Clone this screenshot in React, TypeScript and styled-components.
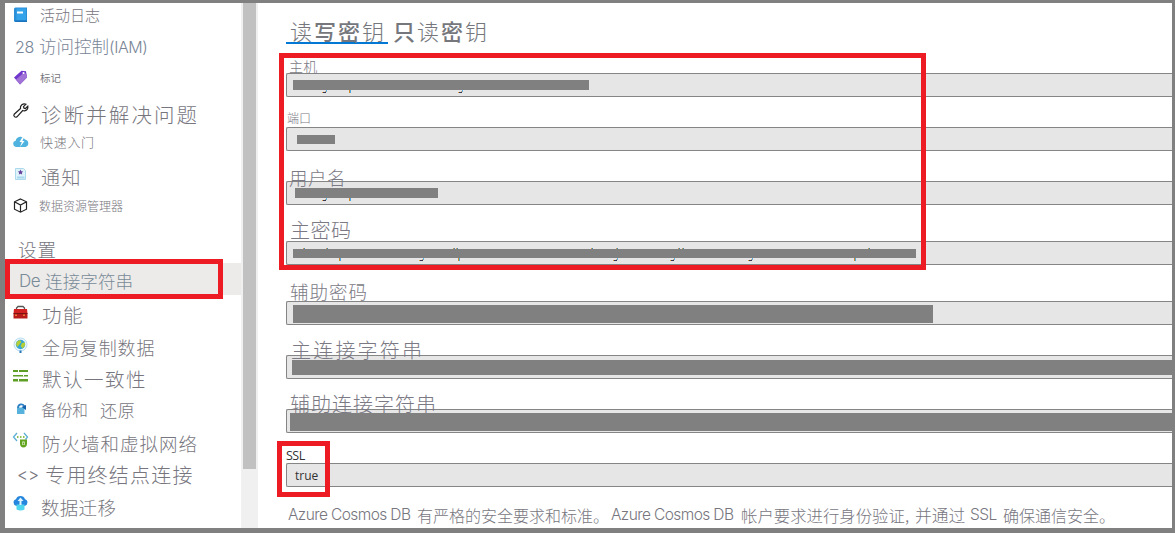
import React from 'react';
import styled, { createGlobalStyle } from 'styled-components';

const Global = createGlobalStyle`
  * { box-sizing: border-box; }
  body { margin: 0; overflow: hidden; font-family: "Noto Sans CJK SC", sans-serif; font-weight: 300; }
`;

const Frame = styled.div`
  position: relative;
  display: flex;
  width: 1175px;
  height: 533px;
  border: solid #808080;
  border-width: 3px 3px 5px 5px;
  background: #fff;
  overflow: hidden;
`;

const Sidebar = styled.nav`
  width: 236px;
  flex: none;
`;

const Item = styled.div<{ $h: number; $active?: boolean }>`
  display: flex;
  align-items: center;
  height: ${(p) => p.$h}px;
  padding-left: 7px;
  background: ${(p) => (p.$active ? '#edebe9' : 'transparent')};
`;

const IconSlot = styled.span<{ $dy?: number }>`
  display: flex;
  flex: none;
  width: 18px;
  height: 18px;
  margin-top: ${(p) => (p.$dy ?? 0) * 2}px;
`;

const Text = styled.span<{ $size: number; $gap?: number; $ml?: number; $dy?: number; $color?: string; $latin?: boolean; $weight?: number }>`
  flex: none;
  font-family: ${(p) => (p.$latin ? 'Inter' : '"Noto Sans CJK SC"')}, sans-serif;
  font-size: ${(p) => p.$size}px;
  font-weight: ${(p) => p.$weight ?? 300};
  line-height: 20px;
  letter-spacing: ${(p) => p.$gap ?? 0}px;
  margin-left: ${(p) => p.$ml ?? 0}px;
  margin-top: ${(p) => (p.$dy ?? 0) * 2}px;
  color: ${(p) => p.$color ?? '#77767e'};
  white-space: pre;
`;

const ScrollTrack = styled.div`
  flex: none;
  width: 17px;
  padding: 0 2px;
  background: #f0f0f0;
`;

const ScrollThumb = styled.div`
  height: 466px;
  background: #c1c1c1;
`;

const Main = styled.main`
  flex: 1;
  min-width: 0;
  padding-left: 28px;
`;

const Tabs = styled.div`
  display: flex;
  height: 41px;
  padding-top: 13px;
`;

const Tab = styled.div<{ $selected?: boolean }>`
  width: 102px;
  height: 28px;
  padding-left: ${(p) => (p.$selected ? 4 : 5)}px;
  border-bottom: 2px solid ${(p) => (p.$selected ? '#0078d4' : 'transparent')};
  font-size: 22px;
  line-height: 28px;
  letter-spacing: 2px;
  color: #75777c;
  white-space: nowrap;
  b { font-weight: 500; }
`;

const Label = styled.div<{ $h: number; $size: number; $gap: number; $ml: number; $up: number; $latin?: boolean }>`
  height: ${(p) => p.$h}px;
  padding-top: ${(p) => p.$up}px;
  padding-left: ${(p) => p.$ml}px;
  font-family: ${(p) => (p.$latin ? '"Open Sans"' : '"Noto Sans CJK SC"')}, sans-serif;
  font-weight: ${(p) => (p.$latin ? 400 : 300)};
  font-size: ${(p) => p.$size}px;
  line-height: 20px;
  letter-spacing: ${(p) => p.$gap}px;
  color: ${(p) => (p.$latin ? '#333' : '#7a7984')};
  white-space: nowrap;
`;

const Input = styled.div<{ $pt?: number; $pl?: number }>`
  height: 24px;
  padding: ${(p) => p.$pt ?? 0}px 0 0 ${(p) => p.$pl ?? 0}px;
  border: 1px solid #858585;
  border-right: 0;
  border-radius: 2px 0 0 2px;
  background: #e6e6e6;
  font-family: "Open Sans", sans-serif;
  font-weight: 400;
  font-size: 12px;
  line-height: 23px;
  color: #333;
`;

const Redaction = styled.div<{ $w?: number; $h: number }>`
  position: relative;
  width: ${(p) => (p.$w ? p.$w + 'px' : '100%')};
  height: ${(p) => p.$h}px;
  background: #808080;
`;

const MarksSvg = styled.svg`
  position: absolute;
  left: 0;
  top: 0;
  overflow: visible;
`;

/* Stroke ends of the covered value that stick out of the redaction bar. */
const Marks = ({ h, hooks = [], stems = [], tops = [] }: { h: number; hooks?: number[]; stems?: number[]; tops?: number[] }) => (
  <MarksSvg width="1" height={h} shapeRendering="crispEdges">
    {hooks.map((x) => (
      <g key={'h' + x}>
        <path d={`M${x} ${h + 2}h1v1h-1z`} fill="#e0a040" />
        <path d={`M${x + 1} ${h + 2}h3v1h-3z`} fill="#3a3550" />
        <path d={`M${x + 4} ${h}h1v2h-1z`} fill="#5ab0e0" />
        <path d={`M${x + 3} ${h + 1}h1v1h-1z`} fill="#c9a070" />
      </g>
    ))}
    {stems.map((x) => (
      <g key={'s' + x}>
        <path d={`M${x} ${h}h1v3h-1z`} fill="#d08a28" />
        <path d={`M${x + 1} ${h}h1v3h-1z`} fill="#4aa8e4" />
      </g>
    ))}
    {tops.map((x) => (
      <g key={'t' + x}>
        <path d={`M${x} -1h1v1h-1z`} fill="#d0a050" />
        <path d={`M${x + 1} -1h1v1h-1z`} fill="#3f88b8" />
      </g>
    ))}
  </MarksSvg>
);

const Highlight = styled.div<{ $x: number; $y: number; $w: number; $h: number }>`
  position: absolute;
  left: ${(p) => p.$x - 5}px;
  top: ${(p) => p.$y - 3}px;
  width: ${(p) => p.$w}px;
  height: ${(p) => p.$h}px;
  border: 5px solid #ed1c24;
`;

const Note = styled.p`
  display: flex;
  height: 20px;
  margin: 18px 0 0 2px;
`;

const NotePart = styled(Text)<{ $w: number }>`
  width: ${(p) => p.$w}px;
`;

const BookIcon = () => (
  <svg width="18" height="18" viewBox="0 0 18 18">
    <path d="M3.500 0.500H15v14.500H3.500A1.500 1.500 0 0 1 2 13.500V2A1.500 1.500 0 0 1 3.500.5z" fill="#2b8fd8" />
    <path d="M4.500 1.500H14v11.500H4.500z" fill="#35a3ea" />
    <path d="M2.500 13.500H15V15H3.500z" fill="#1a74bd" />
    <path d="M5 4.500h6v2H5z" fill="#fff" />
  </svg>
);
const TagIcon = () => (
  <svg width="18" height="18" viewBox="0 0 18 18">
    <path d="M2 8.500 9.500 1.800l4.500.4 1 6.300-7 7z" fill="#6f35cc" />
    <path d="m4 10.500 8-7 2.500 1.500.4 3.500L8 15.500z" fill="#a273d6" />
    <circle cx="11.500" cy="4" r="1" fill="#fff" />
  </svg>
);
const WrenchIcon = () => (
  <svg width="18" height="18" viewBox="0 0 18 18" fill="none" stroke="#222" strokeWidth="1.200">
    <path d="M14 2.200 11.500 4.700l.5 1.500 1.500.3 2.300-2.300c.6 2.500-1.100 4.700-3.600 4.600-.6 0-1-.1-1.500-.3L5 14.800c-1.800 1.300-4-.8-2.800-2.600L8.500 6.500C7.700 3.600 11 .8 14 2.200z" />
  </svg>
);
const CloudIcon = () => (
  <svg width="18" height="18" viewBox="0 0 18 18">
    <path d="M4 14a3.200 3.200 0 0 1-.3-6.300A5 5 0 0 1 13 6.500 3.800 3.800 0 0 1 13.200 14z" fill="#50b3df" />
    <path d="m10.500 4-3 5h2.300L8 14l4.500-6h-2.200l2-4z" fill="#fff" />
  </svg>
);
const NoticeIcon = () => (
  <svg width="18" height="18" viewBox="0 0 18 18">
    <path d="M3.500 3.500h8l2 2V14.500h-10z" fill="#dff3fb" stroke="#acd9ec" />
    <path d="M5 11.500h7.500v2H5z" fill="#a8d8ed" />
    <path d="m8.500 4.500.8 1.700 1.900.2-1.400 1.300.4 1.900-1.700-.9-1.700.9.400-1.900-1.400-1.300 1.900-.2z" fill="#65419c" />
  </svg>
);
const CubeIcon = () => (
  <svg width="18" height="18" viewBox="0 0 18 18" fill="none" stroke="#222" strokeWidth="1.200">
    <path d="m8.500 2 6 2.800v7.400l-6 3-6-3V4.800zM2.500 4.800l6 3.200 6-3.200M8.500 8v7.200" />
  </svg>
);
const ToolboxIcon = () => (
  <svg width="18" height="18" viewBox="0 0 18 18">
    <path d="M4.500 5.500V4l1.500-1.500h5L12.500 4v1.500" fill="none" stroke="#555" strokeWidth="1.300" />
    <path d="M2 5h13l.5 4.500h-14z" fill="#d32020" />
    <path d="M1.500 9.500h14v5h-14z" fill="#b81a1a" />
    <path d="M1.500 9h14v1h-14z" fill="#7b1010" />
    <path d="M3 10.500h2v1.500H3zM11 10.500h2v1.500h-2z" fill="#e8783c" />
  </svg>
);
const GlobeIcon = () => (
  <svg width="18" height="18" viewBox="0 0 18 18">
    <circle cx="8.500" cy="7.500" r="6.500" fill="#edf7fc" stroke="#b9def2" />
    <circle cx="8.500" cy="7.500" r="4.700" fill="#32a5d8" />
    <path d="M5 4.500 8 3l1.500 2L7 8 5.500 10 4 7.500zM10 6l3-.5v3l-2.500 3L8.500 9z" fill="#b3cf35" />
    <path d="M7.500 13.500h2v2.500h-2z" fill="#2676b8" />
  </svg>
);
const BarsIcon = () => (
  <svg width="18" height="18" viewBox="0 0 18 18">
    <path d="M1 3h15v2H1zM1 8h15v1.500H1zM1 12h15v2.500H1z" fill="#5f9e24" />
    <path d="M6 3h1v2H6zM11 8h1v1.500h-1zM6 12h1v2.500H6z" fill="#fff" />
  </svg>
);
const BackupIcon = () => (
  <svg width="18" height="18" viewBox="0 0 18 18">
    <path d="M5 7.500h7.500V14H5z" fill="#56b2dd" />
    <path d="M6 8c0-4 5-5 6.500-1.500" fill="none" stroke="#2f80c4" strokeWidth="1.800" />
    <path d="m9.500 7 4.500-2v5z" fill="#1560ab" />
  </svg>
);
const FirewallIcon = () => (
  <svg width="18" height="18" viewBox="0 0 18 18">
    <path d="M5 1 1.500 5 5 9M12 1l3.500 4-2 2.500" fill="none" stroke="#5bb0d4" strokeWidth="1.300" />
    <path d="M5 4.200h1.500v1.500H5zM8 4.200h1.500v1.500H8zM11 4.200h1.500v1.500H11z" fill="#6daf21" />
    <path d="M8 7.500h7v4c0 2.500-1.500 4-3.500 4S8 14 8 11.500z" fill="#62a420" />
    <path d="M10.300 9.500h2.400v3.500h-2.400z" fill="#e8f3d8" />
    <path d="M11 10.500h1v2h-1z" fill="#62a420" />
  </svg>
);
const MigrateIcon = () => (
  <svg width="18" height="18" viewBox="0 0 18 18">
    <path d="M4.500 11a3.500 3.500 0 0 1-.5-6.800 4.800 4.800 0 0 1 9 0A3.500 3.500 0 0 1 12.500 11z" fill="#2685dc" />
    <path d="M4.500 9.500h8V14.500q-4 2-8 0z" fill="#50d5ee" />
    <path d="M8.500 2.500 11.500 6H9.500v4h-2V6h-2z" fill="#dff5ff" />
  </svg>
);

export default function App() {
  return (
    <>
      <Global />
      <Frame>
        <Sidebar>
          <Item $h={25}><IconSlot><BookIcon /></IconSlot><Text $size={15} $ml={10} $dy={-0.5}>活动日志</Text></Item>
          <Item $h={37}><Text $size={16} $gap={-0.3} $ml={3} $color="#788596" $latin>28</Text><Text $size={17.5} $ml={5} $dy={-0.5} $color="#788596">访问控制</Text><Text $size={16} $gap={-0.4} $color="#788596" $latin>(IAM)</Text></Item>
          <Item $h={27}><IconSlot $dy={-0.5}><TagIcon /></IconSlot><Text $size={10.5} $ml={10} $dy={-1} $weight={400}>标记</Text></Item>
          <Item $h={41}><IconSlot $dy={-2}><WrenchIcon /></IconSlot><Text $size={20.5} $gap={2.1} $ml={11} $dy={1}>诊断并解决问题</Text></Item>
          <Item $h={16}><IconSlot $dy={1}><CloudIcon /></IconSlot><Text $size={13} $gap={0.7} $ml={10} $dy={1}>快速入门</Text></Item>
          <Item $h={49}><IconSlot><NoticeIcon /></IconSlot><Text $size={19} $gap={1.5} $ml={11} $dy={3}>通知</Text></Item>
          <Item $h={13}><IconSlot $dy={1}><CubeIcon /></IconSlot><Text $size={12} $ml={9} $dy={1}>数据资源管理器</Text></Item>
          <Item $h={52}><Text $size={18.5} $gap={1} $ml={6} $dy={12}>设置</Text></Item>
          <Item $h={32} $active><Text $size={17} $gap={-0.5} $ml={7} $dy={1.5} $color="#788a98" $latin>De</Text><Text $size={17.6} $ml={5} $dy={1.5} $color="#788a98">连接字符串</Text></Item>
          <Item $h={40}><IconSlot $dy={-2.5}><ToolboxIcon /></IconSlot><Text $size={19.5} $gap={1.5} $ml={12}>功能</Text></Item>
          <Item $h={25}><IconSlot $dy={-2}><GlobeIcon /></IconSlot><Text $size={18} $gap={0.9} $ml={12} $dy={-1}>全局复制数据</Text></Item>
          <Item $h={38}><IconSlot $dy={-3}><BarsIcon /></IconSlot><Text $size={19.5} $gap={1.5} $ml={12}>默认一致性</Text></Item>
          <Item $h={25}><IconSlot $dy={-2}><BackupIcon /></IconSlot><Text $size={15.7} $ml={11} $dy={-1}>备份和</Text><Text $size={17} $gap={0.7} $ml={12} $dy={-1}>还原</Text></Item>
          <Item $h={43}><IconSlot $dy={-4}><FirewallIcon /></IconSlot><Text $size={18.5} $gap={1} $ml={12} $dy={-2}>防火墙和虚拟网络</Text></Item>
          <Item $h={20}><Text $size={17} $ml={5} $dy={-1} $latin>&lt;&gt;</Text><Text $size={20} $gap={1.2} $ml={6} $dy={-1}>专用终结点连接</Text></Item>
          <Item $h={43}><IconSlot $dy={-4}><MigrateIcon /></IconSlot><Text $size={18.5} $gap={0.3} $ml={11} $dy={-1}>数据迁移</Text></Item>
        </Sidebar>
        <ScrollTrack><ScrollThumb /></ScrollTrack>
        <Main>
          <Tabs>
            <Tab $selected>读<b>写密</b>钥</Tab>
            <Tab><b>只</b>读<b>密</b>钥</Tab>
          </Tabs>
          <Label $h={29} $size={14} $gap={0.2} $ml={3} $up={12}>主机</Label>
          <Input $pt={6} $pl={6}><Redaction $w={296} $h={10}><Marks h={10} hooks={[29, 165]} stems={[56]} /></Redaction></Input>
          <Label $h={30} $size={12} $gap={0} $ml={1} $up={11}>端口</Label>
          <Input $pt={7} $pl={10}><Redaction $w={38} $h={9} /></Input>
          <Label $h={30} $size={18.5} $gap={0.5} $ml={3} $up={16}>用户名</Label>
          <Input $pt={6} $pl={8}><Redaction $w={143} $h={10}><Marks h={10} hooks={[27]} stems={[54]} /></Redaction></Input>
          <Label $h={36} $size={20} $gap={0.5} $ml={4} $up={15}>主密码</Label>
          <Input $pt={7} $pl={6}>
            <Redaction $w={623} $h={9}>
              <Marks h={9} hooks={[126, 320, 377, 455]} stems={[46, 165, 561]} tops={[10, 33, 160, 163, 298, 323, 385, 389, 575]} />
            </Redaction>
          </Input>
          <Label $h={36} $size={18.5} $gap={1} $ml={4} $up={16}>辅助密码</Label>
          <Input $pt={3} $pl={6}><Redaction $w={640} $h={18} /></Input>
          <Label $h={30} $size={20} $gap={2.2} $ml={5} $up={15}>主连接字符串</Label>
          <Input $pt={4} $pl={5}><Redaction $h={15} /></Input>
          <Label $h={30} $size={20} $gap={1} $ml={4} $up={15}>辅助连接字符串</Label>
          <Input $pt={3} $pl={3}><Redaction $h={18} /></Input>
          <Label $h={30} $size={12.5} $gap={-0.5} $ml={0} $up={13} $latin>SSL</Label>
          <Input $pl={8}>true</Input>
          <Note>
            <NotePart $w={129} $size={15.5} $gap={-0.6} $latin>Azure Cosmos DB</NotePart>
            <NotePart $w={194} $size={16}>有严格的安全要求和标准。</NotePart>
            <NotePart $w={130} $size={15.5} $gap={-0.6} $latin>Azure Cosmos DB</NotePart>
            <NotePart $w={174} $size={16.4}>帐户要求进行身份验证,</NotePart>
            <NotePart $w={55} $size={16.8}>并通过</NotePart>
            <NotePart $w={33} $size={15.5} $gap={-0.6} $latin>SSL</NotePart>
            <NotePart $w={112} $size={16}>确保通信安全。</NotePart>
          </Note>
        </Main>
        <Highlight $x={279} $y={53} $w={647} $h={217} />
        <Highlight $x={5} $y={259} $w={218} $h={40} />
        <Highlight $x={277} $y={441} $w={53} $h={56} />
      </Frame>
    </>
  );
}
